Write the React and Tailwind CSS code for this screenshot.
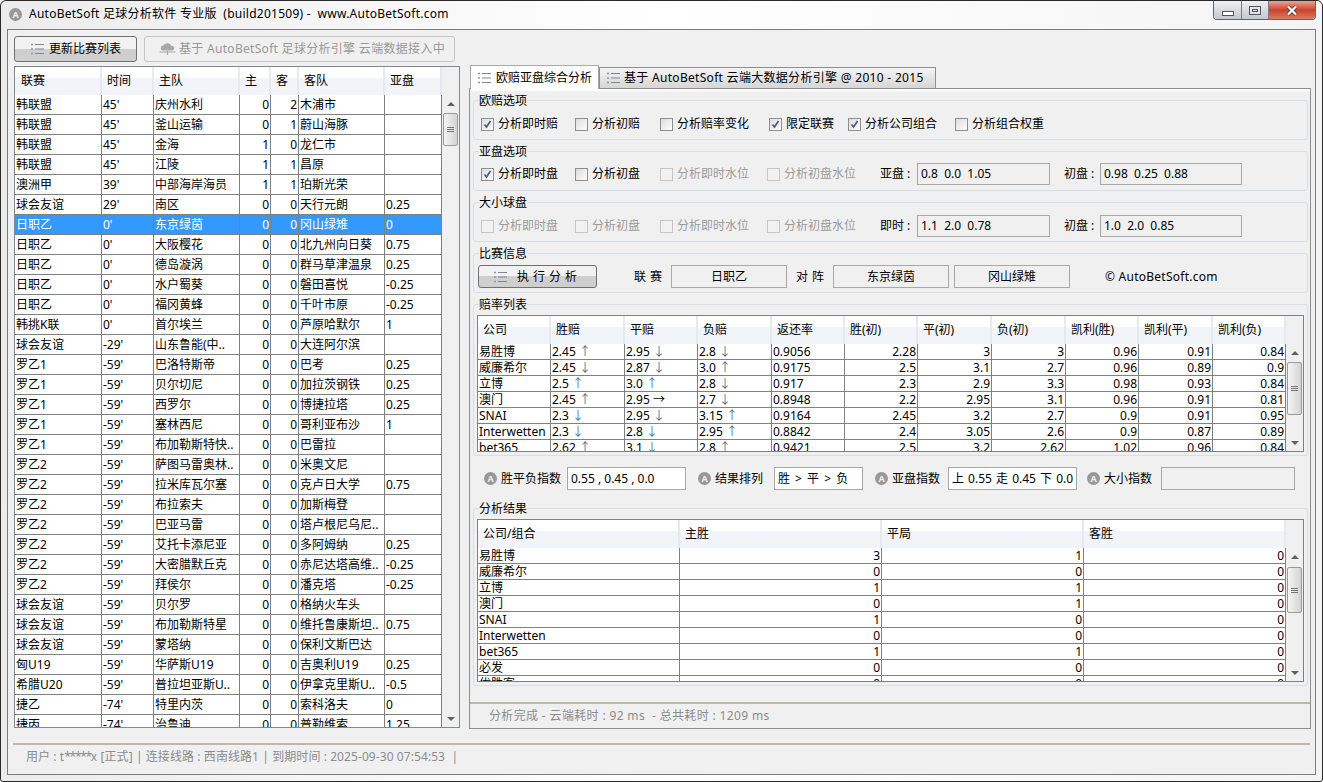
import React from 'react';

const matches = [
  ['韩联盟', "45'", '庆州水利', 0, 2, '木浦市', ''],
  ['韩联盟', "45'", '釜山运输', 0, 1, '蔚山海豚', ''],
  ['韩联盟', "45'", '金海', 1, 0, '龙仁市', ''],
  ['韩联盟', "45'", '江陵', 1, 1, '昌原', ''],
  ['澳洲甲', "39'", '中部海岸海员', 1, 1, '珀斯光荣', ''],
  ['球会友谊', "29'", '南区', 0, 0, '天行元朗', '0.25'],
  ['日职乙', "0'", '东京绿茵', 0, 0, '冈山绿雉', '0'],
  ['日职乙', "0'", '大阪樱花', 0, 0, '北九州向日葵', '0.75'],
  ['日职乙', "0'", '德岛漩涡', 0, 0, '群马草津温泉', '0.25'],
  ['日职乙', "0'", '水户蜀葵', 0, 0, '磐田喜悦', '-0.25'],
  ['日职乙', "0'", '福冈黄蜂', 0, 0, '千叶市原', '-0.25'],
  ['韩挑K联', "0'", '首尔埃兰', 0, 0, '芦原哈默尔', '1'],
  ['球会友谊', "-29'", '山东鲁能(中..', 0, 0, '大连阿尔滨', ''],
  ['罗乙1', "-59'", '巴洛特斯帝', 0, 0, '巴考', '0.25'],
  ['罗乙1', "-59'", '贝尔切尼', 0, 0, '加拉茨钢铁', '0.25'],
  ['罗乙1', "-59'", '西罗尔', 0, 0, '博捷拉塔', '0.25'],
  ['罗乙1', "-59'", '塞林西尼', 0, 0, '哥利亚布沙', '1'],
  ['罗乙1', "-59'", '布加勒斯特快..', 0, 0, '巴雷拉', ''],
  ['罗乙2', "-59'", '萨图马雷奥林..', 0, 0, '米奥文尼', ''],
  ['罗乙2', "-59'", '拉米库瓦尔塞', 0, 0, '克卢日大学', '0.75'],
  ['罗乙2', "-59'", '布拉索夫', 0, 0, '加斯梅登', ''],
  ['罗乙2', "-59'", '巴亚马雷', 0, 0, '塔卢根尼乌尼..', ''],
  ['罗乙2', "-59'", '艾托卡添尼亚', 0, 0, '多阿姆纳', '0.25'],
  ['罗乙2', "-59'", '大密腊默丘克', 0, 0, '赤尼达塔高维..', '-0.25'],
  ['罗乙2', "-59'", '拜侯尔', 0, 0, '潘克塔', '-0.25'],
  ['球会友谊', "-59'", '贝尔罗', 0, 0, '格纳火车头', ''],
  ['球会友谊', "-59'", '布加勒斯特星', 0, 0, '维托鲁康斯坦..', '0.75'],
  ['球会友谊', "-59'", '蒙塔纳', 0, 0, '保利文斯巴达', ''],
  ['匈U19', "-59'", '华萨斯U19', 0, 0, '吉奥利U19', '0.25'],
  ['希腊U20', "-59'", '普拉坦亚斯U..', 0, 0, '伊拿克里斯U..', '-0.5'],
  ['捷乙', "-74'", '特里内茨', 0, 0, '索科洛夫', '0'],
  ['捷丙', "-74'", '治鲁迪', 0, 0, '普勒维索', '1.25'],
];

const matchColumns = ['w-[87px]', 'w-[52px]', 'w-[86px]', 'w-[31px]', 'w-[28px]', 'w-[86px]', 'w-[57px]'];
const matchHeaders = ['联赛', '时间', '主队', '主', '客', '客队', '亚盘'];

const oddsColumns = ['w-[73px]', 'w-[74px]', 'w-[73px]', 'w-[74px]', 'w-[73px]', 'w-[73px]', 'w-[74px]', 'w-[74px]', 'w-[73px]', 'w-[74px]', 'w-[73px]'];
const oddsHeaders = ['公司', '胜赔', '平赔', '负赔', '返还率', '胜(初)', '平(初)', '负(初)', '凯利(胜)', '凯利(平)', '凯利(负)'];
const odds = [
  ['易胜博', '2.45 ↑', '2.95 ↓', '2.8 ↓', '0.9056', '2.28', '3', '3', '0.96', '0.91', '0.84'],
  ['威廉希尔', '2.45 ↓', '2.87 ↓', '3.0 ↑', '0.9175', '2.5', '3.1', '2.7', '0.96', '0.89', '0.9'],
  ['立博', '2.5 ↑', '3.0 ↑', '2.8 ↓', '0.917', '2.3', '2.9', '3.3', '0.98', '0.93', '0.84'],
  ['澳门', '2.45 ↑', '2.95 →', '2.7 ↓', '0.8948', '2.2', '2.95', '3.1', '0.96', '0.91', '0.81'],
  ['SNAI', '2.3 ↓', '2.95 ↓', '3.15 ↑', '0.9164', '2.45', '3.2', '2.7', '0.9', '0.91', '0.95'],
  ['Interwetten', '2.3 ↓', '2.8 ↓', '2.95 ↑', '0.8842', '2.4', '3.05', '2.6', '0.9', '0.87', '0.89'],
  ['bet365', '2.62 ↑', '3.1 ↓', '2.8 ↑', '0.9421', '2.5', '3.2', '2.62', '1.02', '0.96', '0.84'],
];

const results = [
  ['易胜博', 3, 1, 0],
  ['威廉希尔', 0, 0, 0],
  ['立博', 1, 1, 0],
  ['澳门', 0, 1, 0],
  ['SNAI', 1, 0, 0],
  ['Interwetten', 0, 0, 0],
  ['bet365', 1, 1, 0],
  ['必发', 0, 0, 0],
  ['优胜客', 0, 0, 0],
];

const headerCell = 'flex items-center pl-[5px] border-r-2 border-[#e6eaee] bg-gradient-to-b from-white from-40% to-[#f1f4f8] to-40%';

// small list glyph used on buttons and tabs
const ListIcon = ({ className = '' }) => (
  <svg width="13" height="12" viewBox="0 0 13 12" className={className}>
    <path d="M0 1.5h2M0 6h2M0 10.5h2" stroke="#8a98a8" strokeWidth="1.6" />
    <path d="M4 1.5h9M4 6h9M4 10.5h9" stroke="#7d8792" strokeWidth="1.2" />
  </svg>
);

const BadgeA = () => (
  <span className="flex h-[13px] w-[13px] shrink-0 items-center justify-center rounded-full bg-[#989898] text-[9px] font-bold leading-none text-[#eeeeee]">
    A
  </span>
);

const Checkbox = ({ label, checked, disabled, width }) => (
  <div className={`flex items-center ${width}`}>
    <span className={`flex h-[13px] w-[13px] items-center justify-center border ${disabled ? 'border-[#c6c6c6] bg-[#f2f2f2]' : 'border-[#8e8f8f] bg-gradient-to-br from-[#dcdcdc] to-white'}`}>
      {checked && (
        <svg width="9" height="9" viewBox="0 0 9 9">
          <path d="M1.5 4.5l2 2.5 4-6" fill="none" stroke="#4d6185" strokeWidth="1.7" />
        </svg>
      )}
    </span>
    <span className={`ml-1 whitespace-nowrap ${disabled ? 'text-[#9c9c9c]' : ''}`}>{label}</span>
  </div>
);

const Group = ({ title, className = '', children }) => (
  <fieldset className={`mx-[3px] rounded-[3px] border border-[#d5dfe5] ${className}`}>
    <legend className="relative top-px ml-[5px] text-[12px] leading-[14px]">{title}</legend>
    {children}
  </fieldset>
);

const ReadOnly = ({ className = '', children }) => (
  <div className={`flex items-center border border-[#a8a8a8] whitespace-nowrap ${className}`}>{children}</div>
);

const Scrollbar = ({ thumb, height }) => (
  <div className={`flex w-[17px] shrink-0 flex-col items-center bg-[#f0f0f0] ${height}`}>
    <div className="flex h-[17px] shrink-0 items-center justify-center">
      <span className="h-0 w-0 border-x-[4px] border-b-[4px] border-x-transparent border-b-[#606060]" />
    </div>
    <div className={`flex w-[15px] shrink-0 flex-col items-center justify-center gap-px rounded-[2px] border border-[#9a9a9a] bg-gradient-to-r from-[#f4f4f4] to-[#d4d4d4] ${thumb}`}>
      <span className="h-px w-[7px] bg-[#777777]" />
      <span className="h-px w-[7px] bg-[#777777]" />
      <span className="h-px w-[7px] bg-[#777777]" />
    </div>
    <div className="flex-1" />
    <div className="flex h-[17px] shrink-0 items-center justify-center">
      <span className="h-0 w-0 border-x-[4px] border-t-[4px] border-x-transparent border-t-[#606060]" />
    </div>
  </div>
);

// odds value with its trend arrow, e.g. "2.45 ↑"
const OddsValue = ({ value }) => {
  const [num, arrow] = String(value).split(' ');
  if (!arrow) return value;
  return (
    <>
      {num} <span className={arrow === '→' ? '' : 'text-[#4f6f8c]'}>{arrow}</span>
    </>
  );
};

const MatchList = () => (
  <div className="mt-[4px] h-[662px] w-[446px] overflow-hidden border border-[#828790] bg-white">
    <div className="flex h-[28px] bg-[#f0f0f0]">
      {matchHeaders.map((name, i) => (
        <div key={name} className={`${headerCell} first:pl-[6px] ${matchColumns[i]}`}>{name}</div>
      ))}
    </div>
    <div className="flex h-[632px]">
      <div className="h-full overflow-hidden">
        {matches.map((row, r) => (
          <div key={r} className={`flex h-[20px] border-b border-[#808080] ${r === 6 ? 'bg-[#3399ff] text-white' : ''}`}>
            {row.map((cell, c) => (
              <div
                key={c}
                className={`overflow-hidden whitespace-nowrap border-r border-[#808080] leading-[19px] ${matchColumns[c]} ${c === 3 || c === 4 ? 'pr-px text-right' : 'pl-px'}`}
              >
                {cell}
              </div>
            ))}
          </div>
        ))}
      </div>
      <Scrollbar height="h-[632px]" thumb="mt-px h-[33px]" />
    </div>
  </div>
);

const OddsTable = () => (
  <div className="mt-[4px] ml-[3px] h-[137px] w-[827px] overflow-hidden border border-[#808080]">
    <div className="flex h-[28px]">
      {oddsHeaders.map((name, i) => (
        <div key={name} className={`${headerCell} ${oddsColumns[i]}`}>{name}</div>
      ))}
    </div>
    <div className="flex h-[107px]">
      <div className="h-full overflow-hidden bg-white">
        {odds.map((row, r) => (
          <div key={r} className="flex h-[16px] border-b border-[#808080]">
            {row.map((cell, c) => (
              <div
                key={c}
                className={`overflow-hidden whitespace-nowrap border-r border-[#808080] leading-[15px] ${oddsColumns[c]} ${c > 4 ? 'pr-px text-right' : 'pl-px'}`}
              >
                <OddsValue value={cell} />
              </div>
            ))}
          </div>
        ))}
      </div>
      <Scrollbar height="h-[107px]" thumb="mt-px h-[53px]" />
    </div>
  </div>
);

const ResultTable = () => (
  <div className="mt-[4px] ml-[3px] h-[163px] w-[827px] overflow-hidden border border-[#808080]">
    <div className="flex h-[28px]">
      {['公司/组合', '主胜', '平局', '客胜'].map((name) => (
        <div key={name} className={`${headerCell} w-[202px]`}>{name}</div>
      ))}
    </div>
    <div className="flex h-[133px]">
      <div className="h-full overflow-hidden bg-white">
        {results.map((row, r) => (
          <div key={r} className="flex h-[16px] border-b border-[#808080]">
            {row.map((cell, c) => (
              <div
                key={c}
                className={`w-[202px] overflow-hidden whitespace-nowrap border-r border-[#808080] leading-[15px] ${c > 0 ? 'pr-px text-right' : 'pl-px'}`}
              >
                {cell}
              </div>
            ))}
          </div>
        ))}
      </div>
      <Scrollbar height="h-[133px]" thumb="mt-[2px] h-[46px]" />
    </div>
  </div>
);

const WindowButtons = () => (
  <div className="mr-[6px] flex h-[19px] overflow-hidden rounded-b-[4px] border border-t-0 border-[#5f6670]">
    <div className="flex w-[28px] items-end justify-center border-r border-[#777d85] bg-gradient-to-b from-[#eef0f2] to-[#c5c8cc] pb-[3px]">
      <span className="h-[5px] w-[12px] border border-[#4f5661] bg-white" />
    </div>
    <div className="flex w-[27px] items-center justify-center border-r border-[#777d85] bg-gradient-to-b from-[#eef0f2] to-[#c5c8cc]">
      <span className="flex h-[9px] w-[12px] items-center justify-center border border-[#4f5661] bg-[#e4e6e8]">
        <span className="h-[3px] w-[6px] border border-[#4f5661]" />
      </span>
    </div>
    <div className="flex w-[46px] items-center justify-center bg-gradient-to-b from-[#e9a497] via-[#c9412b] to-[#d97a66]">
      <svg width="12" height="11" viewBox="0 0 12 11">
        <path d="M2 1.5l8 8M10 1.5l-8 8" stroke="#4c3030" strokeWidth="3.6" />
        <path d="M2 1.5l8 8M10 1.5l-8 8" stroke="#ffffff" strokeWidth="2.2" />
      </svg>
    </div>
  </div>
);

export default function App() {
  return (
    <div
      className="h-[782px] w-[1323px] overflow-hidden rounded-t-[6px] rounded-b-[3px] border border-[#2a2a2a] bg-gradient-to-r from-[#ececec] via-white to-[#f4f4f4] text-[12px] text-black"
      style={{ fontFamily: '"Noto Sans", "Noto Sans CJK SC", sans-serif' }}
    >
      {/* Title bar */}
      <div className="flex h-[28px] items-start justify-between">
        <div className="flex h-[26px] items-center pl-[8px]">
          <BadgeA />
          <span className="ml-[7px] whitespace-pre tracking-[0.25px]">AutoBetSoft 足球分析软件 专业版  (build201509) -  www.AutoBetSoft.com</span>
        </div>
        <WindowButtons />
      </div>

      {/* Client area */}
      <div className="ml-[6px] flex h-[746px] w-[1309px] flex-col border border-[#7c7c7c] bg-[#f0f0f0]">
        <div className="flex h-[698px]">
          {/* Left column */}
          <div className="ml-[6px] w-[446px] pt-[6px]">
            <div className="flex h-[26px] gap-[7px]">
              <button className="flex w-[123px] items-center rounded-[3px] border border-[#707070] bg-gradient-to-b from-[#f2f2f2] from-50% to-[#cfcfcf] to-50% pl-[16px]">
                <ListIcon />
                <span className="ml-[5px]">更新比赛列表</span>
              </button>
              <button className="flex w-[311px] items-center rounded-[3px] border border-[#c4c4c4] bg-[#f0f0f0] pl-[14px] text-[#999999]">
                <svg width="17" height="12" viewBox="0 0 17 12">
                  <path d="M4 7.5a2.5 2.5 0 0 1 .5-5A4.5 4.5 0 0 1 12.5 3 2.3 2.3 0 0 1 13.5 7.5z" fill="#a8a8a8" />
                  <path d="M0.5 9h16M8.5 8v4" stroke="#a8a8a8" strokeWidth="1.2" />
                </svg>
                <span className="ml-[3px] whitespace-nowrap tracking-[0.3px]">基于 AutoBetSoft 足球分析引擎 云端数据接入中</span>
              </button>
            </div>
            <MatchList />
          </div>

          {/* Right column */}
          <div className="ml-[9px] w-[842px] pt-[35px]">
            <div className="flex h-[23px] items-end pl-px">
              <div className="relative z-10 -mb-px flex h-[24px] w-[129px] items-center border-x border-t border-[#a8a8a8] bg-white pl-[7px]">
                <ListIcon />
                <span className="ml-[5px] whitespace-nowrap">欧赔亚盘综合分析</span>
              </div>
              <div className="flex h-[21px] w-[337px] items-center border-x border-t border-[#8e8e8e] bg-gradient-to-b from-[#f4f4f4] to-[#d6d6d6] pl-[7px]">
                <ListIcon />
                <span className="ml-[4px] whitespace-nowrap tracking-[0.3px]">基于 AutoBetSoft 云端大数据分析引擎 @ 2010 - 2015</span>
              </div>
            </div>
            <div className="flex h-[641px] flex-col border border-[#8f8f8f] pt-[4px] shadow-[inset_0_2px_0_#ffffff]">
              <Group title="欧赔选项" className="h-[47px] w-[835px]">
                <div className="mt-[6px] flex h-[22px] items-center pl-[7px]">
                  <Checkbox label="分析即时赔" checked width="w-[94px]" />
                  <Checkbox label="分析初赔" width="w-[85px]" />
                  <Checkbox label="分析赔率变化" width="w-[109px]" />
                  <Checkbox label="限定联赛" checked width="w-[79px]" />
                  <Checkbox label="分析公司组合" checked width="w-[107px]" />
                  <Checkbox label="分析组合权重" width="w-[100px]" />
                </div>
              </Group>

              <Group title="亚盘选项" className="mt-[4px] h-[47px] w-[835px]">
                <div className="mt-[5px] flex h-[22px] items-center pl-[7px]">
                  <Checkbox label="分析即时盘" checked width="w-[94px]" />
                  <Checkbox label="分析初盘" width="w-[85px]" />
                  <Checkbox label="分析即时水位" disabled width="w-[107px]" />
                  <Checkbox label="分析初盘水位" disabled width="w-[113px]" />
                  <span className="w-[37px] whitespace-nowrap">亚盘 :</span>
                  <ReadOnly className="h-[22px] w-[133px] pl-[3px]">0.8&nbsp;&nbsp;0.0&nbsp;&nbsp;1.05</ReadOnly>
                  <span className="ml-[14px] w-[36px] whitespace-nowrap">初盘 :</span>
                  <ReadOnly className="h-[22px] w-[142px] pl-[3px]">0.98&nbsp;&nbsp;0.25&nbsp;&nbsp;0.88</ReadOnly>
                </div>
              </Group>

              <Group title="大小球盘" className="mt-[4px] h-[47px] w-[835px]">
                <div className="mt-[6px] flex h-[22px] items-center pl-[7px]">
                  <Checkbox label="分析即时盘" disabled width="w-[94px]" />
                  <Checkbox label="分析初盘" disabled width="w-[85px]" />
                  <Checkbox label="分析即时水位" disabled width="w-[107px]" />
                  <Checkbox label="分析初盘水位" disabled width="w-[113px]" />
                  <span className="w-[37px] whitespace-nowrap">即时 :</span>
                  <ReadOnly className="h-[22px] w-[133px] pl-[3px]">1.1&nbsp;&nbsp;2.0&nbsp;&nbsp;0.78</ReadOnly>
                  <span className="ml-[14px] w-[36px] whitespace-nowrap">初盘 :</span>
                  <ReadOnly className="h-[22px] w-[142px] pl-[3px]">1.0&nbsp;&nbsp;2.0&nbsp;&nbsp;0.85</ReadOnly>
                </div>
              </Group>

              <Group title="比赛信息" className="mt-[4px] h-[47px] w-[835px]">
                <div className="mt-[5px] flex h-[23px] items-center pl-[4px]">
                  <button className="flex h-[23px] w-[119px] items-center rounded-[3px] border border-[#707070] bg-gradient-to-b from-[#f2f2f2] from-50% to-[#cfcfcf] to-50% pl-[15px]">
                    <ListIcon />
                    <span className="ml-[10px] tracking-[4px] whitespace-nowrap">执行分析</span>
                  </button>
                  <span className="ml-[37px] w-[37px] tracking-[4px] whitespace-nowrap">联赛</span>
                  <ReadOnly className="h-[23px] w-[116px] justify-center">日职乙</ReadOnly>
                  <span className="ml-[9px] w-[37px] tracking-[4px] whitespace-nowrap">对阵</span>
                  <ReadOnly className="h-[23px] w-[116px] justify-center">东京绿茵</ReadOnly>
                  <ReadOnly className="ml-[5px] h-[23px] w-[116px] justify-center">冈山绿雉</ReadOnly>
                  <span className="ml-[35px] whitespace-nowrap tracking-[0.25px]">© AutoBetSoft.com</span>
                </div>
              </Group>

              <Group title="赔率列表" className="mt-[4px] h-[159px] w-[835px]">
                <OddsTable />
              </Group>

              {/* Index summary row */}
              <div className="mt-[11px] flex h-[23px] items-center pl-[14px]">
                <BadgeA />
                <span className="ml-[4px] w-[60px]">胜平负指数</span>
                <ReadOnly className="ml-[6px] h-[23px] w-[119px] bg-white pl-[3px]">0.55 , 0.45 , 0.0</ReadOnly>
                <span className="ml-[12px]"><BadgeA /></span>
                <span className="ml-[4px] w-[48px]">结果排列</span>
                <ReadOnly className="ml-[11px] h-[23px] w-[89px] bg-white pl-[3px] [word-spacing:2px]">胜 &gt; 平 &gt; 负</ReadOnly>
                <span className="ml-[12px]"><BadgeA /></span>
                <span className="ml-[4px] w-[48px]">亚盘指数</span>
                <ReadOnly className="ml-[8px] h-[23px] w-[129px] bg-white pl-[3px] [word-spacing:1px]">上 0.55 走 0.45 下 0.0</ReadOnly>
                <span className="ml-[10px]"><BadgeA /></span>
                <span className="ml-[4px] w-[48px]">大小指数</span>
                <ReadOnly className="ml-[9px] h-[23px] w-[134px]" />
              </div>

              <Group title="分析结果" className="mt-[11px] h-[185px] w-[835px]">
                <ResultTable />
              </Group>

              <div className="mt-[16px] flex flex-1 items-center whitespace-pre border-t-2 border-[#bdb9a8] pl-[19px] tracking-[0.35px] text-[#8c8c8c]">
                分析完成 - 云端耗时 : 92 ms  - 总共耗时 : 1209 ms
              </div>
            </div>
          </div>
        </div>

        {/* Status bar */}
        <div className="mx-[5px] mt-[15px] flex flex-1 items-start whitespace-pre border-t-2 border-[#bdb9a8] pl-[13px] pt-[3px] tracking-[0.08px] text-[#8c8c8c]">
          用户 : t<span className="tracking-[-1.3px]">*****</span>x [正式] | 连接线路 : 西南线路1 | 到期时间 : 2025-09-30 07:54:53  |
        </div>
      </div>
    </div>
  );
}
